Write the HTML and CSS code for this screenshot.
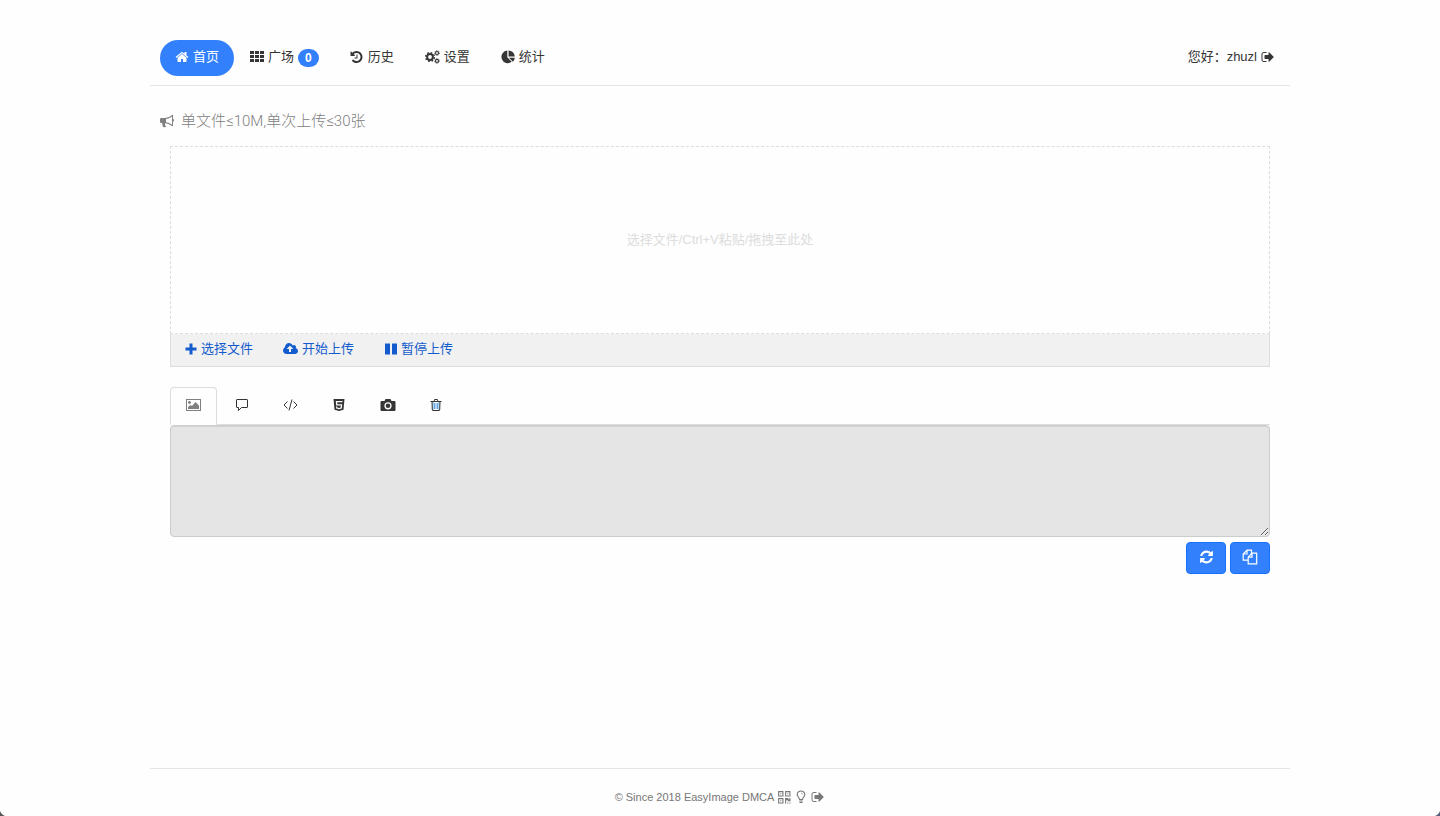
FILE: index.html
```html
<!DOCTYPE html>
<html lang="zh-CN">
<head>
<meta charset="utf-8">
<meta name="viewport" content="width=device-width, initial-scale=1">
<title>EasyImage</title>
<link rel="stylesheet" href="styles.css">
</head>
<body>
<svg class="sprite" aria-hidden="true">
  <symbol id="home" viewBox="0 0 1792 1792"><path d="M1472 992v480q0 26-19 45t-45 19h-384v-384h-256v384h-384q-26 0-45-19t-19-45v-480q0-1 .5-3t.5-3l575-474 575 474q1 2 1 6zm223-69l-62 74q-8 9-21 11h-3q-13 0-21-7l-692-577-692 577q-12 8-24 7-13-2-21-11l-62-74q-8-10-7-23.5t11-21.5l719-599q32-26 76-26t76 26l244 204v-195q0-14 9-23t23-9h192q14 0 23 9t9 23v408l219 182q10 8 11 21.5t-7 23.5z"/></symbol>
  <symbol id="grid" viewBox="0 0 14 14"><path d="M0 1h4v3H0zM5 1h4v3H5zM10 1h4v3h-4zM0 5h4v3H0zM5 5h4v3H5zM10 5h4v3h-4zM0 9h4v3H0zM5 9h4v3H5zM10 9h4v3h-4z"/></symbol>
  <symbol id="history" viewBox="128 0 1664 1792"><path d="M1664 896q0 156-61 298t-164 245-245 164-298 61q-172 0-327-72.500t-264-204.500q-7-10-6.500-22.500t8.500-20.500l137-138q10-9 25-9 16 2 23 12 73 95 179 147t225 52q104 0 198.500-40.500t163.500-109.500 109.500-163.500 40.500-198.500-40.500-198.500-109.500-163.500-163.500-109.500-198.500-40.500q-98 0-188 35.500t-160 101.500l137 138q31 30 14 69-17 40-59 40h-448q-26 0-45-19t-19-45v-448q0-42 40-59 39-17 69 14l130 129q107-101 244.500-156.500t284.500-55.500q156 0 298 61t245 164 164 245 61 298zm-640-288v448q0 14-9 23t-23 9h-320q-14 0-23-9t-9-23v-64q0-14 9-23t23-9h224v-352q0-14 9-23t23-9h64q14 0 23 9t9 23z"/></symbol>
  <symbol id="cogs" viewBox="0 0 15 14"><g fill="none" stroke="currentColor"><circle cx="5" cy="7" r="2.900" stroke-width="2"/><circle cx="5" cy="7" r="4.400" stroke-width="1.400" stroke-dasharray="1.700 1.756"/><circle cx="12" cy="3" r="1.500" stroke-width="1.100"/><circle cx="12" cy="3" r="2.400" stroke-width=".8" stroke-dasharray="1 .885"/><circle cx="12" cy="10.900" r="1.500" stroke-width="1.100"/><circle cx="12" cy="10.900" r="2.400" stroke-width=".8" stroke-dasharray="1 .885"/></g></symbol>
  <symbol id="pie" viewBox="0 0 14 14"><path d="M6.300 7.200l4.400 4.600A6.300 6.300 0 1 1 6.300.6zM7.600.4a6.200 6.200 0 0 1 6.100 6.200H7.600zM8 7.700h5.800a6 6 0 0 1-1.900 4z"/></symbol>
  <symbol id="signout" viewBox="0 0 1792 1792"><path d="M704 1440q0 4 1 20t.5 26.500-3 23.500-10 19.500-20.500 6.500h-320q-119 0-203.500-84.500t-84.500-203.500v-704q0-119 84.500-203.500t203.500-84.500h320q13 0 22.500 9.500t9.500 22.500q0 4 1 20t.5 26.500-3 23.500-10 19.500-20.500 6.500h-320q-66 0-113 47t-47 113v704q0 66 47 113t113 47h312l11.500 1 11.500 3 8 5.500 7 9 2 13.500zm928-544q0 26-19 45l-544 544q-19 19-45 19t-45-19-19-45v-288h-448q-26 0-45-19t-19-45v-384q0-26 19-45t45-19h448v-288q0-26 19-45t45-19 45 19l544 544q19 19 19 45z"/></symbol>
  <symbol id="horn" viewBox="0 0 14 14"><path fill-rule="evenodd" d="M13 1v4a1 1 0 0 1 0 2.400v4q0 .8-.9.800Q9.200 9.600 5.600 9.200c-.8.300-.9 1.100-.3 1.600-.4.700.1 1.200 1 1.800-.5 1-2.600.9-3.300.2-.4-1.300-1-2.300-.6-3.700H1.300Q0 9 0 7.800V5.200Q0 4 1.300 4H5q4 0 7-3 .6-.5 1 0zM12 2.400Q9.300 4.700 6 5v3.200q3.300.4 6 2.600z"/></symbol>
  <symbol id="plus" viewBox="0 0 12 12"><path d="M4.500.5h3v4h4v3h-4v4h-3v-4h-4v-3h4z"/></symbol>
  <symbol id="cloud" viewBox="-64 0 1920 1792"><path d="M1216 864q0-14-9-23l-352-352q-9-9-23-9t-23 9l-351 351q-10 12-10 24 0 14 9 23t23 9h224v352q0 13 9.500 22.500t22.500 9.500h192q13 0 22.500-9.500t9.500-22.500v-352h224q13 0 22.500-9.500t9.500-22.500zm640 288q0 159-112.500 271.500t-271.500 112.500h-1088q-185 0-316.500-131.500t-131.500-316.500q0-130 70-240t188-165q-2-30-2-43 0-212 150-362t362-150q156 0 285.500 87t188.500 231q71-62 166-62 106 0 181 75t75 181q0 76-41 138 130 31 213.500 135.500t83.500 238.500z"/></symbol>
  <symbol id="pause" viewBox="0 0 13 14"><path d="M1 1.500h5v11H1zM8 1.500h5v11H8z"/></symbol>
  <symbol id="image" viewBox="0 0 15 14"><path fill-rule="evenodd" d="M0 1h15v12H0zM1 2v10h13V2zM2 11V9l2.500-2L6 8l3.500-4L13 7.500V11z"/><circle cx="3.500" cy="4.500" r="1.400"/></symbol>
  <symbol id="comment" viewBox="0 0 14 14"><path fill="none" stroke="currentColor" d="M2 1.500h10q.5 0 .5.500V9q0 .5-.5.500H6.500L3.500 12.500v-3H2q-.5 0-.5-.5V2q0-.5.500-.5z"/></symbol>
  <symbol id="code" viewBox="0 0 15 14"><path fill="none" stroke="currentColor" d="M4.500 3.500L1 7l3.500 3.500M10.500 3.500L14 7l-3.500 3.500M9 1.500l-3 11"/></symbol>
  <symbol id="html5" viewBox="0 0 12 14"><path fill-rule="evenodd" d="M.5 1h11l-1 10.700L6 13l-4.500-1.300zM2.800 3l.4 4.500h4.600l-.2 2L6 10l-1.700-.5-.1-1H3l.2 2L6 11.300l2.800-.8.400-4.200H4.400l-.2-2h5.200L9.500 3z"/></symbol>
  <symbol id="camera" viewBox="0 0 16 14"><path fill-rule="evenodd" d="M1.500 3h3l1-2h5l1 2h3q1 0 1 1v8q0 1-1 1h-13q-1 0-1-1V4q0-1 1-1zM8 4.200a3.600 3.600 0 1 0 0 7.200 3.600 3.600 0 1 0 0-7.200zM8 5.500a2.300 2.300 0 1 1 0 4.600 2.300 2.300 0 1 1 0-4.600z"/></symbol>
  <symbol id="trash" viewBox="0 0 12 14"><path fill="none" stroke="#65a9e6" d="M4.500 5v6M6 5v6M7.500 5v6M3 4v8M9 4v8"/><path fill="none" stroke="currentColor" d="M.5 3.500h11M4 3.500l.6-2h2.800l.6 2M2 3.500l.3 8.500q0 .5.700.5h6q.7 0 .7-.5l.3-8.500"/></symbol>
  <symbol id="refresh" viewBox="0 0 1792 1792"><path d="M1639 1056q0 5-1 7-64 268-268 434.500t-478 166.500q-146 0-282.500-55t-243.500-157l-129 129q-19 19-45 19t-45-19-19-45v-448q0-26 19-45t45-19h448q26 0 45 19t19 45-19 45l-137 137q71 66 161 102t187 36q134 0 250-65t186-179q11-17 53-117 8-23 30-23h192q13 0 22.500 9.500t9.500 22.500zm25-800v448q0 26-19 45t-45 19h-448q-26 0-45-19t-19-45 19-45l138-138q-148-137-349-137-134 0-250 65t-186 179q-11 17-53 117-8 23-30 23h-199q-13 0-22.500-9.500t-9.500-22.500v-7q65-268 270-434.500t480-166.500q146 0 284 55.500t245 156.500l130-129q19-19 45-19t45 19 19 45z"/></symbol>
  <symbol id="copy" viewBox="0 0 16 16"><path fill="none" stroke="currentColor" stroke-width="1.200" d="M6 11.200H1.200V5L5 1.200h4.500v3M5 1.200V5H1.200M6.200 8.200L10 4.200h4.700v10.600H6.200zM10 4.200v4H6.200"/></symbol>
  <symbol id="qr" viewBox="0 0 13 13"><path fill-rule="evenodd" d="M1 1h5v5H1zM2 2v3h3V2zM7.500 1h5v5h-5zM8.500 2v3h3V2zM1 7.500h5v5H1zM2 8.500v3h3v-3zM3 3h1v1H3zM9.500 3h1v1h-1zM3 9.500h1v1H3zM7.500 7.500h3v1h1v-1h1v3H10v-1H8.500v3h-1zM9.500 11.500h1v1h-1zM11.500 11.500h1v1h-1z"/></symbol>
  <symbol id="bulb" viewBox="0 0 12 14"><path fill="none" stroke="currentColor" stroke-width="1.100" d="M4.500 9.500Q4.300 8 3.200 6.800C.8 4 3 1 6 1s5.200 3 2.800 5.800Q7.700 8 7.500 9.500zM4.300 11h3.400M4.500 12.500h3"/><path fill="none" stroke="currentColor" stroke-width=".6" d="M6 3q1.400 0 1.600 1.500"/></symbol>
</svg>
<div class="page">
  <header class="header">
    <nav class="nav">
      <a class="pill pill-active" href="#"><svg class="icon"><use href="#home"/></svg>首页</a>
      <a class="pill" href="#"><svg class="icon"><use href="#grid"/></svg>广场<span class="badge">0</span></a>
      <a class="pill" href="#"><svg class="icon"><use href="#history"/></svg>历史</a>
      <a class="pill" href="#"><svg class="icon icon-wide"><use href="#cogs"/></svg>设置</a>
      <a class="pill" href="#"><svg class="icon"><use href="#pie"/></svg>统计</a>
    </nav>
    <a class="pill" href="#">您好：zhuzl<svg class="icon"><use href="#signout"/></svg></a>
  </header>
  <main class="main">
    <p class="notice"><svg class="icon"><use href="#horn"/></svg>单文件≤10M,单次上传≤30张</p>
    <section class="uploader">
      <div class="dropzone">选择文件/Ctrl+V粘贴/拖拽至此处</div>
      <div class="actions">
        <button class="action" type="button"><svg class="icon icon-small"><use href="#plus"/></svg>选择文件</button>
        <button class="action" type="button"><svg class="icon icon-wide"><use href="#cloud"/></svg>开始上传</button>
        <button class="action" type="button"><svg class="icon icon-slim"><use href="#pause"/></svg>暂停上传</button>
      </div>
    </section>
    <section class="links">
      <div class="tabs">
        <button class="tab tab-active" type="button" aria-label="直链"><svg class="icon icon-wide"><use href="#image"/></svg></button>
        <button class="tab" type="button" aria-label="论坛代码"><svg class="icon"><use href="#comment"/></svg></button>
        <button class="tab" type="button" aria-label="Markdown"><svg class="icon icon-wide"><use href="#code"/></svg></button>
        <button class="tab" type="button" aria-label="HTML"><svg class="icon"><use href="#html5"/></svg></button>
        <button class="tab" type="button" aria-label="缩略图"><svg class="icon icon-wider"><use href="#camera"/></svg></button>
        <button class="tab" type="button" aria-label="删除"><svg class="icon icon-small"><use href="#trash"/></svg></button>
      </div>
      <textarea class="output" aria-label="链接" readonly></textarea>
      <div class="buttons">
        <button class="btn" type="button" aria-label="刷新"><svg class="btn-icon btn-icon-small"><use href="#refresh"/></svg></button>
        <button class="btn" type="button" aria-label="复制"><svg class="btn-icon"><use href="#copy"/></svg></button>
      </div>
    </section>
  </main>
  <footer class="footer">
    <span>© Since 2018 <a href="#">EasyImage</a> <a href="#">DMCA</a></span>
    <a href="#" aria-label="二维码"><svg class="icon"><use href="#qr"/></svg></a>
    <a href="#" aria-label="主题"><svg class="icon"><use href="#bulb"/></svg></a>
    <a href="#" aria-label="退出"><svg class="icon"><use href="#signout"/></svg></a>
  </footer>
</div>
<span class="corner corner-left"></span>
<span class="corner corner-right"></span>
</body>
</html>
```

FILE: styles.css
```css
* { box-sizing: border-box; }
body {
  margin: 0;
  background: #fefefe;
  color: #353535;
  font: 13px/20px "Liberation Sans", "Noto Sans CJK SC", sans-serif;
}
a { color: inherit; text-decoration: none; }
button { font: inherit; color: inherit; background: none; border: 0; cursor: pointer; }
svg { fill: currentColor; }
.sprite { position: absolute; width: 0; height: 0; }
.icon { width: 14px; height: 14px; flex: none; }
.icon-small { width: 12px; }
.icon-slim { width: 13px; }
.icon-wide { width: 15px; }
.icon-wider { width: 16px; }

.page {
  max-width: 1140px;
  min-height: 100vh;
  margin: 0 auto;
  padding-top: 40px;
  display: flex;
  flex-direction: column;
}
.header {
  display: flex;
  justify-content: space-between;
  padding: 0 0 9px 10px;
  border-bottom: 1px solid #e5e5e5;
}
.nav { display: flex; gap: 1px; }
.pill {
  display: flex;
  align-items: center;
  gap: 4px;
  height: 36px;
  padding: 0 15px 2px;
  border-radius: 18px;
}
.pill-active { background: #3280fc; color: #fff; }
.badge {
  margin-top: 2px;
  padding: 0 7px;
  border-radius: 9px;
  background: #3280fc;
  color: #fff;
  font-size: 12px;
  font-weight: 700;
  line-height: 18px;
}

.main { flex: 1; }
.notice {
  display: flex;
  align-items: center;
  gap: 7px;
  margin: 25px 10px 15px;
  color: #808080;
  font-family: Roboto, "Noto Sans CJK SC", sans-serif;
  font-size: 15px;
  font-weight: 300;
}
.uploader, .links { margin: 0 20px 20px; }
.dropzone {
  display: flex;
  align-items: center;
  justify-content: center;
  height: 188px;
  border: 1px dashed #ddd;
  color: #ddd;
}
.actions {
  display: flex;
  gap: 30px;
  padding: 5px 14px 7px;
  border: 1px solid #ddd;
  border-top: 0;
  background: #f1f1f1;
  color: #145ccd;
}
.action { display: flex; align-items: center; gap: 4px; padding: 0; }

.tabs { display: flex; gap: 2px; border-bottom: 1px solid #ddd; }
.tab {
  display: flex;
  align-items: center;
  height: 38px;
  margin-bottom: -1px;
  padding: 0 15px 2px;
  border: 1px solid transparent;
  border-radius: 4px 4px 0 0;
}
.tab-active { border-color: #ddd; border-bottom-color: #fefefe; background: #fefefe; color: #808080; }
.output {
  display: block;
  width: 100%;
  height: 112px;
  padding: 5px 8px;
  border: 1px solid #ccc;
  border-radius: 4px;
  background: #e5e5e5;
  box-shadow: inset 0 1px 1px rgba(0, 0, 0, .08);
  font: inherit;
  resize: vertical;
}
.buttons { display: flex; justify-content: flex-end; gap: 4px; margin-top: 5px; }
.btn {
  display: flex;
  align-items: center;
  justify-content: center;
  width: 40px;
  height: 32px;
  padding: 0 0 2px;
  border: 1px solid #1970fc;
  border-radius: 4px;
  background: #3280fc;
  color: #fff;
}
.btn-icon { width: 16px; height: 16px; }
.btn-icon-small { width: 15px; }

.footer {
  display: flex;
  justify-content: center;
  align-items: center;
  gap: 3px;
  padding: 18px 0 9px;
  border-top: 1px solid #e5e5e5;
  color: #777;
  font-size: 11px;
}
.footer a svg { display: block; }
.corner { position: fixed; bottom: 0; width: 8px; height: 8px; }
.corner-left { left: 0; background: radial-gradient(circle at 100% 0, transparent 8px, #555 9px); }
.corner-right { right: 0; background: radial-gradient(circle at 0 0, transparent 8px, #55607c 9px); }
```
